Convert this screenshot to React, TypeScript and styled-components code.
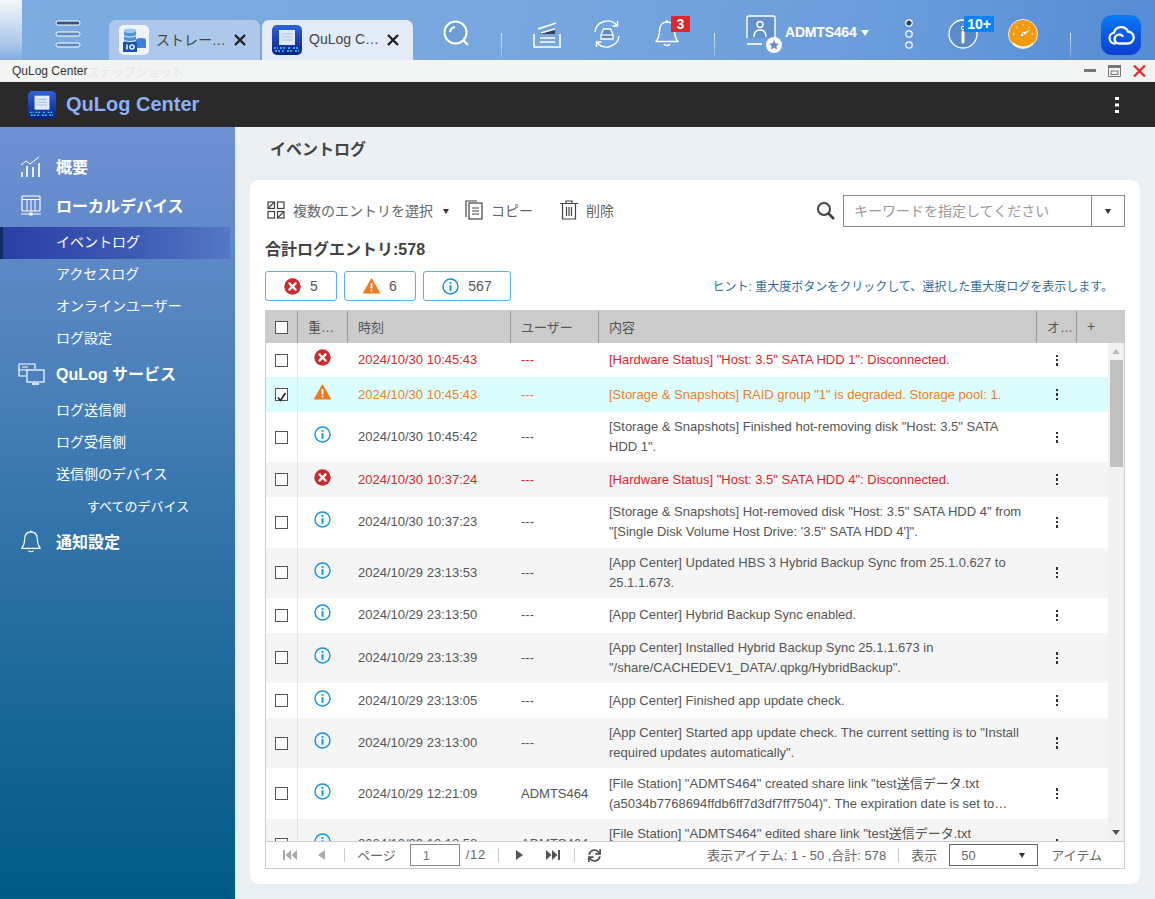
import React from 'react';
import styled, { createGlobalStyle } from 'styled-components';
import { FaSync } from 'react-icons/fa';

const Global = createGlobalStyle`
  html, body { margin: 0; padding: 0; height: 100%; overflow: hidden; }
  body { font-family: "Liberation Sans", "Noto Sans CJK JP", sans-serif; color: #555; background: #ebf0f4; }
  * { box-sizing: border-box; }
`;

const Page = styled.div`display: flex; flex-direction: column; height: 100vh; overflow: hidden;`;

const TopBar = styled.header`
  height: 60px; flex: none; display: flex; align-items: center;
  background: linear-gradient(100deg, #7cabe0 0%, #78a7df 45%, #6a9ddb 75%, #568cd5 100%);
`;
const LeftStrip = styled.div`width: 22px; align-self: stretch; background: linear-gradient(180deg, #f4f7fc 0%, #a9c5ea 75%, #82aee2 100%);`;
const MenuSlot = styled.div`width: 87px; display: flex; justify-content: center; padding-left: 5px; padding-top: 8px;`;
const Tabs = styled.div`display: flex; gap: 2px; align-self: flex-end;`;
const Tab = styled.div<{ $active?: boolean }>`
  width: 151px; height: 40px; border-radius: 7px 7px 0 0; display: flex; align-items: center; padding-left: 10px; gap: 7px;
  background: ${p => (p.$active ? '#e3ebf8' : '#aec8eb')};
`;
const TabLabel = styled.span`width: 72px; padding-bottom: 2px; font-size: 14px; color: #444; white-space: nowrap; overflow: hidden; text-overflow: ellipsis;`;
const TabClose = styled.svg`width: 14px; height: 14px; flex: none; margin-left: -2px;`;
const Slot = styled.div<{ $w: number; $ml?: number }>`width: ${p => p.$w}px; margin-left: ${p => p.$ml ?? 0}px; flex: none; display: flex; justify-content: center; align-items: center; position: relative; padding-top: 8px;`;
const Divider = styled.div<{ $ml: number }>`
  width: 1px; height: 25px; align-self: flex-end; margin: 0 0 2px ${p => p.$ml}px; flex: none;
  background: linear-gradient(180deg, rgba(255,255,255,.75), rgba(255,255,255,.15));
`;
const CountBadge = styled.span<{ $bg: string; $l: number; $w: number }>`
  position: absolute; top: 5px; left: ${p => p.$l}px; width: ${p => p.$w}px; height: 16px; background: ${p => p.$bg};
  color: #fff; font-size: 14px; font-weight: 700; line-height: 16px; text-align: center;
`;
const UserBlock = styled.div`width: 140px; margin-left: 30px; flex: none; display: flex; align-items: center; padding-top: 8px;`;
const UserName = styled.span`font-size: 14px; font-weight: 700; letter-spacing: -.2px; color: #fff; margin-left: 2px; width: 71px; margin-top: -4px; white-space: nowrap;`;
const UserCaret = styled.span`width: 0; height: 0; margin: -2px 0 0 5px; border-left: 4px solid transparent; border-right: 4px solid transparent; border-top: 6px solid #fff;`;
const CloudButton = styled.div`
  width: 40px; height: 40px; margin: 10px 0 0 30px; border-radius: 11px; flex: none; display: flex; align-items: center; justify-content: center;
  background: linear-gradient(180deg, #0a7af5, #0a3ecf);
`;

const TitleBar = styled.div`height: 22px; flex: none; background: #f3f4f4; display: flex; align-items: center; padding: 0 9px 0 12px; font-size: 12px; color: #333;`;
const Ghost = styled.span`color: #e6e7e7; margin-right: auto;`;
const WinButtons = styled.div`display: flex; gap: 12px; align-items: center;`;

const AppHeader = styled.div`height: 45px; flex: none; background: #2a2a2a; display: flex; align-items: center; padding: 0 36px 0 28px;`;
const AppName = styled.span`font-size: 20px; font-weight: 700; color: #8ab0f5; margin-left: 10px; margin-right: auto;`;

const Body = styled.div`flex: 1; min-height: 0; display: flex;`;
const Sidebar = styled.nav`width: 235px; flex: none; padding-top: 22px; background: linear-gradient(180deg, #7090d4 0%, #4e82bd 30%, #2f71a8 55%, #005a87 100%);`;
const NavHead = styled.div<{ $h?: number }>`
  height: ${p => p.$h ?? 40}px; display: flex; align-items: center; color: #fff; font-weight: 700; font-size: 16px; position: relative; padding: 0 0 4px 56px;
`;
const NavIcon = styled.span`position: absolute; left: 17px; top: calc(50% - 1px); transform: translateY(-50%); width: 28px; height: 28px; display: flex; align-items: center; justify-content: center;`;
const NavItem = styled.div<{ $active?: boolean; $deep?: boolean }>`
  height: 32px; width: 230px; display: flex; align-items: center; color: #fff;
  font-size: ${p => (p.$deep ? 13 : 14)}px;
  padding-bottom: 4px;
  padding-left: ${p => (p.$deep ? 87 : 56)}px;
  ${p => p.$active && `
    padding-left: 53px; border-left: 3px solid #0d2b66;
    background: linear-gradient(90deg, #2a3fa5 0%, #3f5cb4 60%, #5577c4 100%);
  `}
`;

const Content = styled.main`flex: 1; min-width: 0; display: flex; flex-direction: column; padding: 0 15px 15px;`;
const PageTitle = styled.h1`margin: 0; height: 53px; padding: 12px 0 0 20px; font-size: 16px; line-height: 22px; font-weight: 700; color: #444;`;
const Card = styled.section`flex: 1; min-height: 0; background: #fff; border-radius: 9px; padding: 15px; display: flex; flex-direction: column;`;

const Toolbar = styled.div`height: 32px; flex: none; display: flex; align-items: center; font-size: 14px; color: #666;`;
const ToolAction = styled.span<{ $ml?: number }>`display: flex; align-items: center; gap: 8px; margin: 0 0 2px ${p => p.$ml ?? 0}px;`;
const Caret = styled.span<{ $ml?: number; $c?: string }>`width: 0; height: 0; margin-left: ${p => p.$ml ?? 0}px; border-left: 3.5px solid transparent; border-right: 3.5px solid transparent; border-top: 5px solid ${p => p.$c ?? '#333'}; flex: none;`;
const SearchWrap = styled.div`margin-left: auto; display: flex; align-items: center; gap: 8px;`;
const SearchGlyph = styled.svg`width: 19px; height: 19px; margin-bottom: 2px; flex: none;`;
const SearchBox = styled.div`width: 282px; height: 32px; border: 1px solid #888; display: flex; align-items: center;`;
const SearchInput = styled.div`flex: 1; padding: 0 0 2px 10px; color: #999; font-size: 14px;`;
const SearchCaret = styled.div`width: 33px; align-self: stretch; border-left: 1px solid #888; display: flex; align-items: center; justify-content: center;`;
const Total = styled.div`height: 44px; flex: none; padding-bottom: 2px; display: flex; align-items: center; font-size: 16px; font-weight: 700; color: #444;`;

const ChipRow = styled.div`height: 30px; flex: none; display: flex; align-items: center; gap: 7px;`;
const Chip = styled.button<{ $w: number }>`
  width: ${p => p.$w}px; height: 30px; border: 1px solid #5cb0ee; border-radius: 3px; background: #fff; padding: 0;
  display: flex; align-items: center; justify-content: center; gap: 9px; font: 14px "Liberation Sans", sans-serif; color: #555;
`;
const Hint = styled.div`margin-left: auto; margin-right: 12px; padding-bottom: 2px; font-size: 12px; color: #2f6f9f;`;

const Table = styled.div`flex: 1; min-height: 0; margin-top: 9px; border: 1px solid #ccc; border-top: 0; display: flex; flex-direction: column; position: relative;`;
const columns = '31px 50px 163px 88px 438px 40px 1fr';
const HeadRow = styled.div`height: 33px; flex: none; margin: 0 -1px; display: grid; grid-template-columns: 32px 50px 163px 88px 438px 40px 1fr; background: #ccc; font-size: 13px; color: #555;`;
const HeadCell = styled.div<{ $pr?: number }>`
  display: flex; align-items: center; min-width: 0; padding: 0 ${p => p.$pr ?? 10}px 2px 10px; position: relative; border-left: 1px solid #999; margin: 1px 0 0;
  &:first-child { border-left: 0; justify-content: center; padding: 0; }
`;
const Plus = styled.span`font-size: 14px; color: #555;`;
const Clip = styled.span`overflow: hidden; text-overflow: ellipsis; white-space: nowrap;`;
const Rows = styled.div`flex: 1; min-height: 0; overflow: hidden; position: relative;`;
const Row = styled.div<{ $tone: string; $bg: string }>`
  min-height: 34.4px; display: grid; grid-template-columns: ${columns}; align-items: stretch; background: ${p => p.$bg};
  color: ${p => p.$tone}; font-size: 13px; line-height: 20px; margin-right: 16px;
`;
const Cell = styled.div`display: flex; align-items: center; min-width: 0; padding: 0 10px 0 11px;`;
const CheckCell = styled(Cell)`padding: 0; justify-content: center;`;
const SevCell = styled(Cell)`padding: 0 0 5px; justify-content: center; border-left: 1px solid #e6e6e6;`;
const MsgCell = styled(Cell)`padding: 5.35px 9px 5.35px 11px;`;
const Msg = styled.div`display: -webkit-box; -webkit-box-orient: vertical; -webkit-line-clamp: 2; overflow: hidden;`;
const OpCell = styled(Cell)`padding: 0 0 0 2px; justify-content: center;`;
const Check = styled.span`width: 13px; height: 13px; border: 1px solid #555; background: #fff; display: block; flex: none; position: relative;`;
const Kebab = styled.span`
  display: flex; flex-direction: column; gap: 2px;
  i { width: 2.4px; height: 2.4px; background: #333; display: block; }
`;
const Scrollbar = styled.div`position: absolute; top: 0; right: 0; bottom: 0; width: 16px; background: #f1f1f1; display: flex; flex-direction: column; align-items: center; padding-top: 6px;`;
const ScrollThumb = styled.div`width: 13px; height: 107px; background: #c1c1c1; margin-top: 6px;`;
const ScrollDown = styled.span`margin-top: auto; margin-bottom: 6px; width: 0; height: 0; border-left: 4px solid transparent; border-right: 4px solid transparent; border-top: 5px solid #555;`;
const ScrollUp = styled.span`width: 0; height: 0; border-left: 4px solid transparent; border-right: 4px solid transparent; border-bottom: 5px solid #bbb;`;

const Footer = styled.div`height: 27px; flex: none; border-top: 1px solid #ccc; background: #fff; display: flex; align-items: center; padding: 0 22px 0 8px; font-size: 13px; color: #666; position: relative;`;
const FooterText = styled.span<{ $sp?: number; $push?: boolean }>`padding-bottom: 2px; white-space: nowrap; flex: none; letter-spacing: ${p => p.$sp ?? 0}px; margin-left: ${p => (p.$push ? 'auto' : '0')};`;
const PagerBtn = styled.span<{ $ml?: number }>`width: 32px; margin-left: ${p => p.$ml ?? 0}px; display: flex; justify-content: center; align-items: center; flex: none;`;
const Sep = styled.span<{ $ml: number; $mr: number }>`width: 1px; height: 14px; background: #ccc; margin: 0 ${p => p.$mr}px 0 ${p => p.$ml}px; flex: none;`;
const PageInput = styled.span`width: 50px; height: 22px; margin: 0 6px 0 14px; border: 1px solid #888; display: flex; align-items: center; padding-left: 12px; color: #777; flex: none;`;
const PageSelect = styled.span`width: 89px; height: 22px; margin: 0 13px 0 12px; border: 1px solid #666; display: flex; align-items: center; justify-content: space-between; padding: 0 12px 0 11px; flex: none;`;

type Tone = 'error' | 'warn' | 'info';
const toneColor: Record<Tone, string> = { error: '#d9272e', warn: '#f07f1e', info: '#555' };

const rows: { t: Tone; time: string; user: string; msg: string; checked?: boolean }[] = [
  { t: 'error', time: '2024/10/30 10:45:43', user: '---', msg: '[Hardware Status] "Host: 3.5" SATA HDD 1": Disconnected.' },
  { t: 'warn', time: '2024/10/30 10:45:43', user: '---', msg: '[Storage & Snapshots] RAID group "1" is degraded. Storage pool: 1.', checked: true },
  { t: 'info', time: '2024/10/30 10:45:42', user: '---', msg: '[Storage & Snapshots] Finished hot-removing disk "Host: 3.5" SATA HDD 1".' },
  { t: 'error', time: '2024/10/30 10:37:24', user: '---', msg: '[Hardware Status] "Host: 3.5" SATA HDD 4": Disconnected.' },
  { t: 'info', time: '2024/10/30 10:37:23', user: '---', msg: '[Storage & Snapshots] Hot-removed disk "Host: 3.5" SATA HDD 4" from "[Single Disk Volume Host Drive: \'3.5" SATA HDD 4\']".' },
  { t: 'info', time: '2024/10/29 23:13:53', user: '---', msg: '[App Center] Updated HBS 3 Hybrid Backup Sync from 25.1.0.627 to 25.1.1.673.' },
  { t: 'info', time: '2024/10/29 23:13:50', user: '---', msg: '[App Center] Hybrid Backup Sync enabled.' },
  { t: 'info', time: '2024/10/29 23:13:39', user: '---', msg: '[App Center] Installed Hybrid Backup Sync 25.1.1.673 in "/share/CACHEDEV1_DATA/.qpkg/HybridBackup".' },
  { t: 'info', time: '2024/10/29 23:13:05', user: '---', msg: '[App Center] Finished app update check.' },
  { t: 'info', time: '2024/10/29 23:13:00', user: '---', msg: '[App Center] Started app update check. The current setting is to "Install required updates automatically".' },
  { t: 'info', time: '2024/10/29 12:21:09', user: 'ADMTS464', msg: '[File Station] "ADMTS464" created share link "test送信データ.txt (a5034b7768694ffdb6ff7d3df7ff7504)". The expiration date is set to…' },
  { t: 'info', time: '2024/10/29 12:18:58', user: 'ADMTS464', msg: '[File Station] "ADMTS464" edited share link "test送信データ.txt (a5034b7768694ffdb6ff7d3df7ff7504)". The expiration date is set to…' },
];

const ErrorIcon = () => (
  <svg width="17" height="17" viewBox="0 0 17 17">
    <circle cx="8.5" cy="8.5" r="8.2" fill="#cb2a2e" />
    <path d="M5.4 5.4l6.2 6.2M11.6 5.4l-6.2 6.2" stroke="#fff" strokeWidth="2.2" strokeLinecap="round" />
  </svg>
);
const WarnIcon = () => (
  <svg width="17" height="16" viewBox="0 0 17 16">
    <path d="M8.5 1L16.4 15H.6z" fill="#f07a1f" stroke="#f07a1f" strokeWidth="1.2" strokeLinejoin="round" />
    <path d="M8.5 5v5.4" stroke="#fff" strokeWidth="1.9" />
    <circle cx="8.5" cy="12.6" r="1.1" fill="#fff" />
  </svg>
);
const InfoIcon = () => (
  <svg width="17" height="17" viewBox="0 0 17 17">
    <circle cx="8.5" cy="8.5" r="7.5" fill="none" stroke="#0b94e9" strokeWidth="1.4" />
    <circle cx="8.5" cy="5" r="1.1" fill="#0b94e9" />
    <path d="M8.5 7.2v5.6" stroke="#0b94e9" strokeWidth="1.9" />
  </svg>
);
const sevIcon = { error: <ErrorIcon />, warn: <WarnIcon />, info: <InfoIcon /> };

const QuLogIcon = ({ size }: { size: number }) => (
  <svg width={size} height={size} viewBox="0 0 30 30">
    <defs>
      <linearGradient id={`ql${size}`} x1="0" y1="0" x2="0" y2="1">
        <stop offset="0" stopColor="#2f63d8" />
        <stop offset="1" stopColor="#0a1f8a" />
      </linearGradient>
    </defs>
    <rect width="30" height="30" rx="5" fill={`url(#ql${size})`} />
    <rect x="7" y="5" width="16" height="15" fill="#dfe9f8" />
    <path d="M10 9h10M10 12h10M10 15h10" stroke="#a9c2e8" strokeWidth="1.2" />
    <path d="M2 23h4M8 23h6M16 23h3M21 23h6M3 26h5M10 26h3M15 26h6M23 26h4" stroke="#35d5f0" strokeWidth="1.4" strokeDasharray="2 1" />
  </svg>
);
const StorageIcon = () => (
  <svg width="30" height="30" viewBox="0 0 30 30">
    <rect width="30" height="30" rx="5" fill="#eef3fa" />
    <path d="M5 6c0-3 12-3 12 0v13H5z" fill="#4d8fe0" />
    <ellipse cx="11" cy="6" rx="6" ry="2.2" fill="#9cc6f5" />
    <path d="M5 10.5c2 2 10 2 12 0M5 15c2 2 10 2 12 0" stroke="#e8f2fd" fill="none" />
    <ellipse cx="22" cy="15" rx="5" ry="2" fill="#3f7fd6" />
    <path d="M17 15v8h10v-8" fill="#3f7fd6" />
    <rect x="4" y="17" width="14" height="10" fill="#1a55ad" />
    <path d="M8 19.5v5" stroke="#fff" strokeWidth="1.4" />
    <circle cx="13" cy="22" r="2.1" fill="none" stroke="#fff" strokeWidth="1.3" />
  </svg>
);
const CloseX = () => (
  <TabClose viewBox="0 0 14 14"><path d="M2 2l10 10M12 2L2 12" stroke="#222" strokeWidth="2.4" /></TabClose>
);

const white = { fill: 'none', stroke: '#fff', strokeWidth: 1.4 } as const;
const Hamburger = () => (
  <svg width="26" height="28" viewBox="0 0 26 28">
    <rect x="1" y="1" width="24" height="4" rx="2" fill="#36527d" stroke="#fff" />
    <rect x="1" y="12" width="24" height="4" rx="2" fill="#5f88c4" stroke="#fff" />
    <rect x="1" y="23" width="24" height="4" rx="2" fill="#5f88c4" stroke="#fff" />
  </svg>
);
const TopSearch = () => (
  <svg width="28" height="28" viewBox="0 0 28 28">
    <circle cx="12.5" cy="12.5" r="11" fill="#5f8cc8" fillOpacity=".35" stroke="#fff" strokeWidth="2" />
    <path d="M7 12a6 6 0 0 1 5-5" fill="none" stroke="#fff" strokeWidth="2" />
    <path d="M20.5 20.5l4.5 4.5" stroke="#fff" strokeWidth="2.2" />
  </svg>
);
const Clapper = () => (
  <svg width="30" height="30" viewBox="0 0 30 30">
    <path d="M2 15v13h26V15M2 28" {...white} strokeWidth="1.6" />
    <path d="M7 15l16-5v5z" fill="#2f3f5f" />
    <path d="M6 10L24 4M8 23h15M8 19h15" stroke="#fff" strokeWidth="1.6" />
    <path d="M9 14l14-4" stroke="#fff" strokeWidth="1.4" />
  </svg>
);
const SyncDisk = () => (
  <svg width="32" height="32" viewBox="0 0 32 32">
    <path d="M4 14A12.5 12.5 0 0 1 26 7.5M28 18A12.5 12.5 0 0 1 6 24.5" {...white} />
    <path d="M26.5 3v5h-5M5.5 29v-5h5" {...white} />
    <path d="M10 17l2.5-6h7l2.5 6v4H10z" fill="#4b6ea6" fillOpacity=".5" stroke="#fff" strokeWidth="1.3" />
    <path d="M10 17h12" stroke="#fff" strokeWidth="1.2" />
  </svg>
);
const Bell = ({ w = 26, stroke = 1.5 }: { w?: number; stroke?: number }) => (
  <svg width={w} height={w + 4} viewBox="0 0 26 30">
    <path d="M13 3c-5 0-7.5 4-7.5 9 0 6-1.5 8-3.5 10.5h22c-2-2.5-3.5-4.5-3.5-10.5 0-5-2.5-9-7.5-9z" fill="none" stroke="#fff" strokeWidth={stroke} strokeLinejoin="round" />
    <path d="M10 25c.5 2 5.5 2 6 0" fill="none" stroke="#fff" strokeWidth={stroke} />
    <circle cx="13" cy="2.5" r="1.2" fill="#fff" />
  </svg>
);
const UserIcon = () => (
  <svg width="38" height="40" viewBox="0 0 38 40">
    <path d="M2 24V4a2 2 0 0 1 2-2h24a2 2 0 0 1 2 2v20" {...white} fill="#4f78b5" fillOpacity=".35" />
    <path d="M2 30h15" stroke="#fff" strokeWidth="1.6" />
    <circle cx="15" cy="10.5" r="3" {...white} />
    <path d="M9 23c0-5 3-7 6-7s6 2 6 7" {...white} />
    <circle cx="29" cy="31" r="8" fill="#fff" />
    <path d="M29 26l1.5 3.3 3.5.4-2.6 2.4.7 3.5-3.1-1.8-3.1 1.8.7-3.5-2.6-2.4 3.5-.4z" fill="#6a8fc0" />
  </svg>
);
const Dots = () => (
  <svg width="10" height="32" viewBox="0 0 10 32">
    <circle cx="5" cy="5" r="3.2" fill="#2b3f66" stroke="#fff" strokeWidth="1.2" />
    <circle cx="5" cy="16" r="3.2" fill="none" stroke="#fff" strokeWidth="1.2" />
    <circle cx="5" cy="27" r="3.2" fill="none" stroke="#fff" strokeWidth="1.2" />
  </svg>
);
const InfoTop = () => (
  <svg width="30" height="30" viewBox="0 0 30 30">
    <circle cx="15" cy="15" r="14" fill="#4a6fa8" fillOpacity=".35" stroke="#fff" strokeWidth="1.3" />
    <circle cx="15" cy="9" r="1.7" fill="none" stroke="#fff" />
    <path d="M15 13v10" stroke="#fff" strokeWidth="3" strokeLinecap="round" />
  </svg>
);
const Gauge = () => (
  <svg width="30" height="30" viewBox="0 0 30 30">
    <circle cx="15" cy="15" r="14.5" fill="#f39a12" stroke="#fff" strokeWidth=".8" />
    <path d="M5 24a14 14 0 0 0 20 0" fill="none" stroke="#fff" strokeWidth="1.4" />
    <path d="M15 5v2M8 8l1.5 1.5M22 8l-1.5 1.5M5 15h2M25 15h-2" stroke="#ffe4b0" strokeWidth="1.3" strokeDasharray="1.5 1" />
    <path d="M13 14l9-3-7 6z" fill="#fff" />
    <circle cx="14" cy="16" r="2" fill="#fff" stroke="#a8650a" strokeWidth=".7" />
  </svg>
);
const Cloud = () => (
  <svg width="28" height="22" viewBox="0 0 28 22">
    <path d="M8 19.5a5.5 5.5 0 0 1-1-10.900A7.500 7.500 0 0 1 21 7.500a6 6 0 0 1-.5 12H12a4.500 4.500 0 1 1 3.500-7.500" fill="none" stroke="#fff" strokeWidth="2.3" strokeLinecap="round" />
  </svg>
);

const NavChart = () => (
  <svg width="22" height="22" viewBox="0 0 22 22">
    <path d="M1 9l5-4 4 3 9-7" fill="none" stroke="#fff" strokeWidth="1" />
    <path d="M2 21v-5M7 21V10M13 21V11M19 21V7" stroke="#fff" strokeWidth="1.7" />
  </svg>
);
const NavDevice = () => (
  <svg width="20" height="22" viewBox="0 0 20 22">
    <rect x="1" y="1" width="18" height="15" rx="1" fill="none" stroke="#fff" strokeWidth="1.2" />
    <path d="M1 4.5h18M6 5v11M10 5v11M14 5v11" stroke="#fff" strokeWidth="1" />
    <path d="M0 19h20" stroke="#fff" strokeWidth="1" />
    <rect x="8.5" y="17.5" width="3" height="3" fill="#fff" />
  </svg>
);
const NavService = () => (
  <svg width="27" height="22" viewBox="0 0 27 22">
    <path d="M8 13H1V1h16v5M1 7h9" fill="none" stroke="#fff" strokeWidth="1.2" />
    <path d="M4 4h6" stroke="#fff" />
    <rect x="9" y="7" width="17" height="12" fill="#4f7fba" stroke="#fff" strokeWidth="1.2" />
    <path d="M14 21h7" stroke="#fff" strokeWidth="1.5" />
  </svg>
);

const SelectIcon = () => (
  <svg width="18" height="18" viewBox="0 0 18 18" fill="none" stroke="#444" strokeWidth="1.2">
    <rect x="1" y="1" width="6.5" height="6.5" /><rect x="10.5" y="1" width="6.5" height="6.5" />
    <rect x="1" y="10.5" width="6.5" height="6.5" /><rect x="10.5" y="10.5" width="6.5" height="6.5" />
    <path d="M1 7.5L7.5 1M10.5 17L17 10.5" />
  </svg>
);
const CopyIcon = () => (
  <svg width="18" height="20" viewBox="0 0 18 20" fill="none" stroke="#444" strokeWidth="1.2">
    <path d="M1 17V1h11" />
    <rect x="4" y="3" width="13" height="16" />
    <path d="M7 8h7M7 11h7M7 14h7" />
  </svg>
);
const TrashIcon = () => (
  <svg width="18" height="20" viewBox="0 0 18 20" fill="none" stroke="#444" strokeWidth="1.2">
    <path d="M0 3.5h18M6 3V1h6v2" />
    <path d="M2.5 4v15h13V4" />
    <path d="M6.5 7v9M9 7v9M11.5 7v9" />
  </svg>
);
const SearchIcon = () => (
  <SearchGlyph viewBox="0 0 19 19" fill="none" stroke="#444">
    <circle cx="8" cy="8" r="6" strokeWidth="2" />
    <path d="M12.5 12.5L18 18" strokeWidth="2.6" />
  </SearchGlyph>
);
const Pager = ({ d, c }: { d: string; c: string }) => (
  <svg width="14" height="12" viewBox="0 0 14 12"><path d={d} fill={c} /></svg>
);
const KebabDots = () => <Kebab><i /><i /><i /></Kebab>;
const CheckBox = ({ checked }: { checked?: boolean }) => (
  <Check>
    {checked && (
      <svg width="11" height="11" viewBox="0 0 11 11"><path d="M2 5.5l2.5 3L9.5 1" fill="none" stroke="#222" strokeWidth="1.6" /></svg>
    )}
  </Check>
);

const HeaderKebab = () => (
  <svg width="4" height="16" viewBox="0 0 4 16"><path d="M0 0h4v3H0zM0 6.5h4v3H0zM0 13h4v3H0z" fill="#fff" /></svg>
);

export default function App() {
  return (
    <Page>
      <Global />
      <TopBar>
        <LeftStrip />
        <MenuSlot><Hamburger /></MenuSlot>
        <Tabs>
          <Tab><StorageIcon /><TabLabel>ストレージ＆スナップショット</TabLabel><CloseX /></Tab>
          <Tab $active><QuLogIcon size={30} /><TabLabel>QuLog Center</TabLabel><CloseX /></Tab>
        </Tabs>
        <Slot $w={88}><TopSearch /></Slot>
        <Divider $ml={0} />
        <Slot $w={60} $ml={15}><Clapper /></Slot>
        <Slot $w={60}><SyncDisk /></Slot>
        <Slot $w={60}><Bell /><CountBadge $bg="#e0252c" $l={34} $w={19}>3</CountBadge></Slot>
        <Divider $ml={17} />
        <UserBlock><UserIcon /><UserName>ADMTS464</UserName><UserCaret /></UserBlock>
        <Slot $w={48}><Dots /></Slot>
        <Slot $w={60}><InfoTop /><CountBadge $bg="#0a84f5" $l={31} $w={30}>10+</CountBadge></Slot>
        <Slot $w={60}><Gauge /></Slot>
        <Divider $ml={17} />
        <CloudButton><Cloud /></CloudButton>
      </TopBar>

      <TitleBar>
        QuLog Center<Ghost>スナップショット</Ghost>
        <WinButtons>
          <svg width="12" height="4" viewBox="0 0 12 4"><rect width="12" height="3" fill="#777" /></svg>
          <svg width="13" height="12" viewBox="0 0 13 12"><path d="M.5.5h12v11H.5z" fill="none" stroke="#777" /><rect x="0" y="0" width="13" height="3" fill="#777" /><rect x="3" y="6" width="7" height="3.5" fill="none" stroke="#777" /></svg>
          <svg width="13" height="12" viewBox="0 0 13 12"><path d="M1 .5l11 11M12 .5l-11 11" stroke="#e8262c" strokeWidth="2.2" /></svg>
        </WinButtons>
      </TitleBar>

      <AppHeader>
        <QuLogIcon size={28} />
        <AppName>QuLog Center</AppName>
        <HeaderKebab />
      </AppHeader>

      <Body>
        <Sidebar>
          <NavHead $h={38}><NavIcon><NavChart /></NavIcon>概要</NavHead>
          <NavHead><NavIcon><NavDevice /></NavIcon>ローカルデバイス</NavHead>
          <NavItem $active>イベントログ</NavItem>
          <NavItem>アクセスログ</NavItem>
          <NavItem>オンラインユーザー</NavItem>
          <NavItem>ログ設定</NavItem>
          <NavHead><NavIcon><NavService /></NavIcon>QuLog サービス</NavHead>
          <NavItem>ログ送信側</NavItem>
          <NavItem>ログ受信側</NavItem>
          <NavItem>送信側のデバイス</NavItem>
          <NavItem $deep>すべてのデバイス</NavItem>
          <NavHead><NavIcon><Bell w={22} stroke={1.3} /></NavIcon>通知設定</NavHead>
        </Sidebar>

        <Content>
          <PageTitle>イベントログ</PageTitle>
          <Card>
            <Toolbar>
              <ToolAction $ml={2}><SelectIcon />複数のエントリを選択</ToolAction>
              <Caret $ml={10} />
              <ToolAction $ml={16}><CopyIcon />コピー</ToolAction>
              <ToolAction $ml={27}><TrashIcon />削除</ToolAction>
              <SearchWrap>
                <SearchIcon />
                <SearchBox>
                  <SearchInput>キーワードを指定してください</SearchInput>
                  <SearchCaret><Caret /></SearchCaret>
                </SearchBox>
              </SearchWrap>
            </Toolbar>
            <Total>合計ログエントリ:578</Total>
            <ChipRow>
              <Chip $w={72}><ErrorIcon />5</Chip>
              <Chip $w={72}><WarnIcon />6</Chip>
              <Chip $w={88}><InfoIcon />567</Chip>
              <Hint>ヒント: 重大度ボタンをクリックして、選択した重大度ログを表示します。</Hint>
            </ChipRow>
            <Table>
              <HeadRow>
                <HeadCell><CheckBox /></HeadCell>
                <HeadCell><Clip>重大度</Clip></HeadCell>
                <HeadCell>時刻</HeadCell>
                <HeadCell>ユーザー</HeadCell>
                <HeadCell>内容</HeadCell>
                <HeadCell $pr={3}><Clip>オプション</Clip></HeadCell>
                <HeadCell><Plus>+</Plus></HeadCell>
              </HeadRow>
              <Rows>
                {rows.map((r, i) => (
                  <Row key={i} $tone={toneColor[r.t]} $bg={r.checked ? '#dcfdfd' : i % 2 ? '#f5f5f5' : '#fff'}>
                    <CheckCell><CheckBox checked={r.checked} /></CheckCell>
                    <SevCell>{sevIcon[r.t]}</SevCell>
                    <Cell>{r.time}</Cell>
                    <Cell>{r.user}</Cell>
                    <MsgCell><Msg>{r.msg}</Msg></MsgCell>
                    <OpCell><KebabDots /></OpCell>
                    <Cell />
                  </Row>
                ))}
                <Scrollbar><ScrollUp /><ScrollThumb /><ScrollDown /></Scrollbar>
              </Rows>
              <Footer>
                <PagerBtn><Pager c="#aaa" d="M0 1h2v10H0zM8 1v10L2.5 6zM14 1v10L8.5 6z" /></PagerBtn>
                <PagerBtn><Pager c="#aaa" d="M10 1v10L3 6z" /></PagerBtn>
                <Sep $ml={6} $mr={12} />
                <FooterText>ページ</FooterText>
                <PageInput>1</PageInput>
                <FooterText $sp={.7}>/12</FooterText>
                <Sep $ml={12} $mr={4} />
                <PagerBtn><Pager c="#555" d="M4 1v10l7-5z" /></PagerBtn>
                <PagerBtn $ml={2}><Pager c="#555" d="M0 1v10l5.5-5zM6 1v10l5.5-5zM12 1h2v10h-2z" /></PagerBtn>
                <Sep $ml={5} $mr={13} />
                <FaSync size={13} color="#555" />
                <FooterText $push>表示アイテム: 1 - 50 ,合計: 578</FooterText>
                <Sep $ml={12} $mr={12} />
                <FooterText>表示</FooterText>
                <PageSelect>50<Caret /></PageSelect>
                <FooterText>アイテム</FooterText>
              </Footer>
            </Table>
          </Card>
        </Content>
      </Body>
    </Page>
  );
}
